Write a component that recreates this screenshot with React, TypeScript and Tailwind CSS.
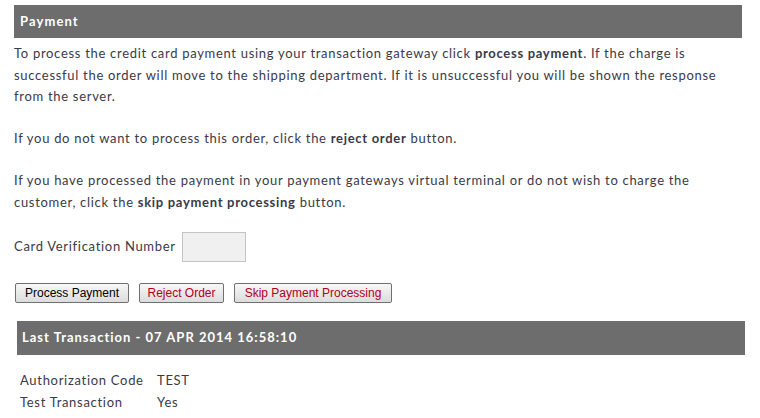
export default function App() {
  const body = "font-['Lato','Open_Sans',sans-serif] text-[13px] tracking-[0.7px] text-[#3a3a48]";
  const btn =
    "h-[20px] whitespace-nowrap px-0 rounded-[2px] border border-[#707070] bg-gradient-to-b from-[#f7f7f7] to-[#dcdcdc] font-['Liberation_Sans',Arial,sans-serif] text-[12px] tracking-normal leading-none";
  return (
    <div className={`min-h-[418px] w-[760px] bg-white pt-[5px] ${body}`}>
      <div className="ml-[14px] w-[728px]">
        <div className="flex h-[33px] items-center bg-[#6d6d6d] px-[6px] font-bold tracking-[1.1px] text-white">
          Payment
        </div>
        <p className="mt-[5px] leading-[21.6px]">
          To process the credit card payment using your transaction gateway click <b>process payment</b>. If the charge
          is successful the order will move to the shipping department. If it is unsuccessful you will be shown the
          response from the server.
        </p>
        <p className="mt-[20px] leading-[21.6px]">
          If you do not want to process this order, click the <b>reject order</b> button.
        </p>
        <p className="mt-[21px] leading-[21.6px]">
          If you have processed the payment in your payment gateways virtual terminal or do not wish to charge the
          customer, click the <b>skip payment processing</b> button.
        </p>
        <div className="mt-[18px] flex items-center gap-[6px]">
          <span>Card Verification Number</span>
          <input className="h-[30px] w-[64px] border border-[#c4c4c4] bg-[#f0f0f0] outline-none" />
        </div>
        <div className="mt-[21px] ml-[1px] flex gap-[10px]">
          <button className={`${btn} w-[114px] text-black`}>Process Payment</button>
          <button className={`${btn} w-[85px] text-[#b0001a]`}>Reject Order</button>
          <button className={`${btn} w-[158px] text-[#b0001a]`}>Skip Payment Processing</button>
        </div>
      </div>
      <div className="ml-[17px] mt-[18px] w-[728px]">
        <div className="flex h-[34px] items-center bg-[#6d6d6d] px-[5px] font-bold tracking-[1px] text-white">
          Last Transaction - 07 APR 2014 16:58:10
        </div>
        <div className="mt-[14px] px-[3px] leading-[22px]">
          <div className="flex">
            <span className="w-[137px]">Authorization Code</span>
            <span>TEST</span>
          </div>
          <div className="flex">
            <span className="w-[137px]">Test Transaction</span>
            <span>Yes</span>
          </div>
        </div>
      </div>
    </div>
  );
}
